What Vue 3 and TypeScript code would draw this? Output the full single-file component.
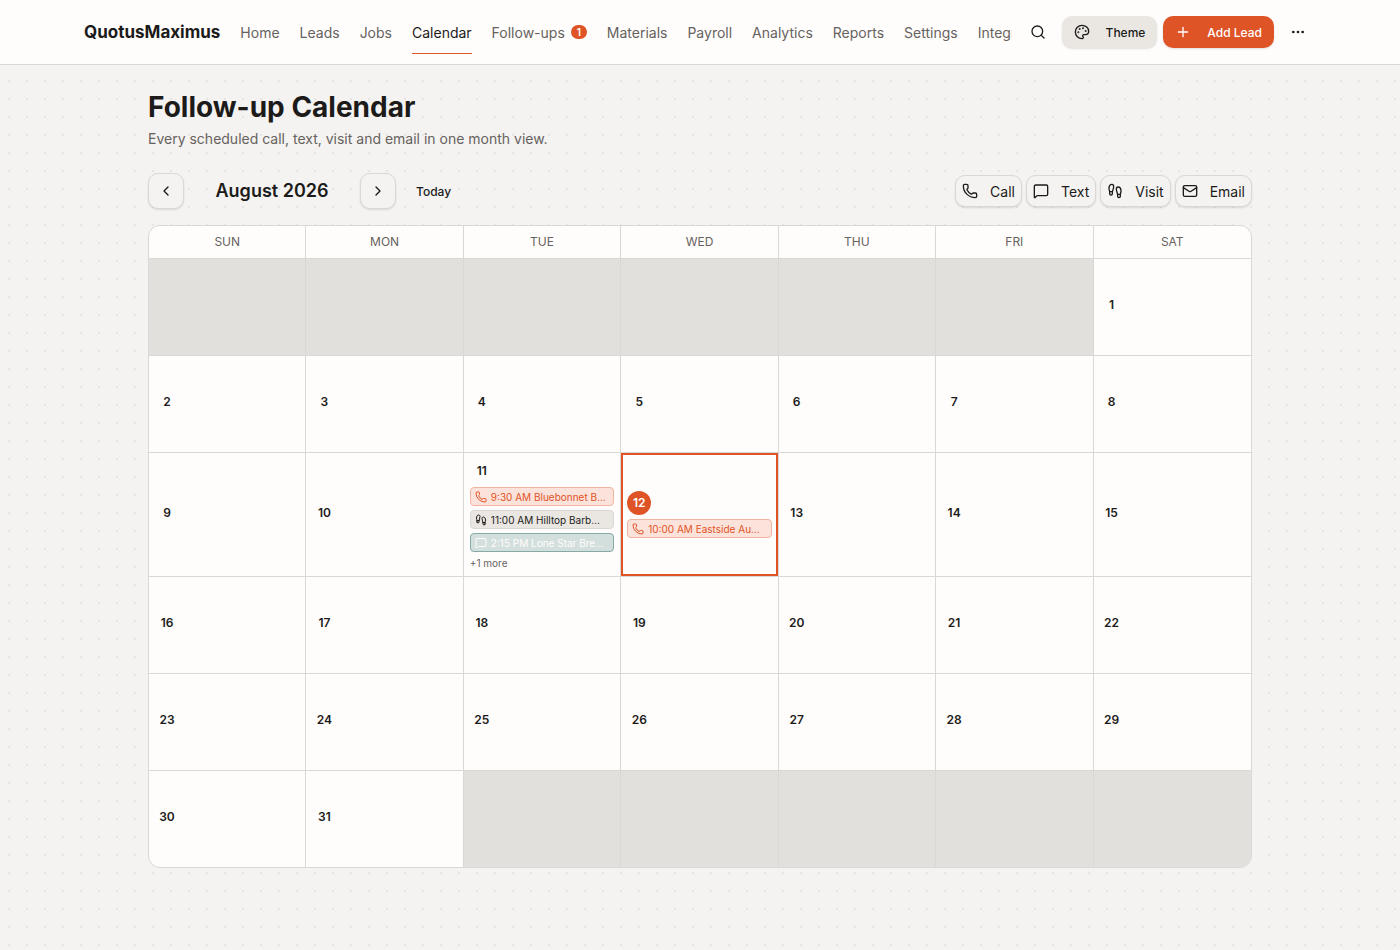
<script setup lang="ts">
import { computed, ref } from 'vue'

type Kind = 'call' | 'text' | 'visit' | 'email'
interface FollowUp { day: number; time: string; name: string; kind: Kind }

const paths: Record<string, string[]> = {
  call: ['M13.832 16.568a1 1 0 0 0 1.213-.303l.355-.465A2 2 0 0 1 17 15h3a2 2 0 0 1 2 2v3a2 2 0 0 1-2 2A18 18 0 0 1 2 4a2 2 0 0 1 2-2h3a2 2 0 0 1 2 2v3a2 2 0 0 1-.8 1.6l-.468.351a1 1 0 0 0-.292 1.233 14 14 0 0 0 6.392 6.384'],
  text: ['M22 17a2 2 0 0 1-2 2H6.828a2 2 0 0 0-1.414.586l-2.202 2.202A.71.71 0 0 1 2 21.286V5a2 2 0 0 1 2-2h16a2 2 0 0 1 2 2z'],
  visit: [
    'M4 16v-2.38C4 11.5 2.97 10.5 3 8c.03-2.72 1.49-6 4.5-6C9.37 2 10 3.8 10 5.5c0 3.11-2 5.66-2 8.68V16a2 2 0 1 1-4 0Z',
    'M20 20v-2.38c0-2.12 1.03-3.12 1-5.62-.03-2.72-1.49-6-4.5-6C14.63 6 14 7.8 14 9.5c0 3.11 2 5.66 2 8.68V20a2 2 0 1 0 4 0Z',
    'M16 17h4', 'M4 13h4',
  ],
  email: ['m22 7-8.991 5.727a2 2 0 0 1-2.009 0L2 7', 'M4 4h16a2 2 0 0 1 2 2v12a2 2 0 0 1-2 2H4a2 2 0 0 1-2-2V6a2 2 0 0 1 2-2z'],
}

const nav = ['Home', 'Leads', 'Jobs', 'Calendar', 'Follow-ups', 'Materials', 'Payroll', 'Analytics', 'Reports', 'Settings', 'Integrations']
const weekdays = ['Sun', 'Mon', 'Tue', 'Wed', 'Thu', 'Fri', 'Sat']
const filters: { kind: Kind; label: string }[] = [
  { kind: 'call', label: 'Call' },
  { kind: 'text', label: 'Text' },
  { kind: 'visit', label: 'Visit' },
  { kind: 'email', label: 'Email' },
]
const followUps: FollowUp[] = [
  { day: 11, time: '9:30 AM', name: 'Bluebonnet B…', kind: 'call' },
  { day: 11, time: '11:00 AM', name: 'Hilltop Barb…', kind: 'visit' },
  { day: 11, time: '2:15 PM', name: 'Lone Star Bre…', kind: 'text' },
  { day: 11, time: '4:00 PM', name: 'Cedar Dental', kind: 'email' },
  { day: 12, time: '10:00 AM', name: 'Eastside Au…', kind: 'call' },
]
const maxShown = 3

const today = { year: 2026, month: 7, day: 12 }
const year = ref(today.year)
const month = ref(today.month)

const title = computed(() =>
  new Date(year.value, month.value, 1).toLocaleDateString('en-US', { month: 'long', year: 'numeric' }))
const isCurrent = computed(() => year.value === today.year && month.value === today.month)

const weeks = computed(() => {
  const lead = new Date(year.value, month.value, 1).getDay()
  const count = new Date(year.value, month.value + 1, 0).getDate()
  const rows = Math.ceil((lead + count) / 7)
  return Array.from({ length: rows }, (_, r) =>
    Array.from({ length: 7 }, (_, c) => {
      const d = r * 7 + c - lead + 1
      return d > 0 && d <= count ? d : 0
    }))
})

const eventsOn = (day: number) => (isCurrent.value && day ? followUps.filter(f => f.day === day) : [])
const isToday = (day: number) => isCurrent.value && day === today.day

function shift(by: number) {
  const d = new Date(year.value, month.value + by, 1)
  year.value = d.getFullYear()
  month.value = d.getMonth()
}
function goToday() {
  year.value = today.year
  month.value = today.month
}
</script>

<template>
  <div class="page">
    <header class="topbar">
      <div class="topbar-inner">
        <a class="brand" href="#">QuotusMaximus</a>
        <nav class="nav" aria-label="Main">
          <a v-for="item in nav" :key="item" href="#" class="nav-link" :class="{ active: item === 'Calendar' }">
            {{ item }}<span v-if="item === 'Follow-ups'" class="count">1</span>
          </a>
        </nav>
        <div class="actions">
          <button class="icon-btn" type="button" aria-label="Search">
            <svg class="icon" viewBox="0 0 24 24"><path d="m21 21-4.34-4.34" /><circle cx="11" cy="11" r="8" /></svg>
          </button>
          <button class="btn theme" type="button">
            <svg class="icon" viewBox="0 0 24 24">
              <path d="M12 22a1 1 0 0 1 0-20 10 9 0 0 1 10 9 5 5 0 0 1-5 5h-2.25a1.75 1.75 0 0 0-1.4 2.8l.3.4a1.75 1.75 0 0 1-1.4 2.8z" />
              <circle class="dot" cx="13.5" cy="6.5" r=".5" /><circle class="dot" cx="17.5" cy="10.5" r=".5" />
              <circle class="dot" cx="6.5" cy="12.5" r=".5" /><circle class="dot" cx="8.5" cy="7.5" r=".5" />
            </svg>
            Theme
          </button>
          <button class="btn primary" type="button">
            <svg class="icon" viewBox="0 0 24 24"><path d="M5 12h14M12 5v14" /></svg>
            Add Lead
          </button>
          <button class="icon-btn" type="button" aria-label="More">
            <svg class="icon" viewBox="0 0 24 24">
              <circle class="dot" cx="12" cy="12" r="1" /><circle class="dot" cx="19" cy="12" r="1" /><circle class="dot" cx="5" cy="12" r="1" />
            </svg>
          </button>
        </div>
      </div>
    </header>

    <main class="content">
      <h1>Follow-up Calendar</h1>
      <p class="lede">Every scheduled call, text, visit and email in one month view.</p>

      <div class="toolbar">
        <div class="pager">
          <button class="square" type="button" aria-label="Previous month" @click="shift(-1)">
            <svg class="icon" viewBox="0 0 24 24"><path d="m15 18-6-6 6-6" /></svg>
          </button>
          <h2>{{ title }}</h2>
          <button class="square" type="button" aria-label="Next month" @click="shift(1)">
            <svg class="icon" viewBox="0 0 24 24"><path d="m9 18 6-6-6-6" /></svg>
          </button>
          <button class="btn today-btn" type="button" @click="goToday">Today</button>
        </div>
        <div class="filters">
          <button v-for="f in filters" :key="f.kind" class="filter" type="button">
            <svg class="icon" viewBox="0 0 24 24"><path v-for="d in paths[f.kind]" :key="d" :d="d" /></svg>
            {{ f.label }}
          </button>
        </div>
      </div>

      <table class="calendar">
        <thead>
          <tr><th v-for="w in weekdays" :key="w" scope="col">{{ w }}</th></tr>
        </thead>
        <tbody>
          <tr v-for="(week, r) in weeks" :key="r">
            <td v-for="(day, c) in week" :key="c" :class="{ blank: !day, today: isToday(day) }">
              <template v-if="day">
                <div class="day">{{ day }}</div>
                <div class="events">
                  <a v-for="e in eventsOn(day).slice(0, maxShown)" :key="e.name" href="#" class="event" :class="e.kind">
                    <svg class="icon" viewBox="0 0 24 24"><path v-for="d in paths[e.kind]" :key="d" :d="d" /></svg>
                    <span class="event-text">{{ e.time }} {{ e.name }}</span>
                  </a>
                  <span v-if="eventsOn(day).length > maxShown" class="more">+{{ eventsOn(day).length - maxShown }} more</span>
                </div>
              </template>
            </td>
          </tr>
        </tbody>
      </table>
    </main>
  </div>
</template>

<style>
body {
  background-color: #f4f3f1;
  background-image: radial-gradient(circle, #e6e5e2 1px, transparent 1px);
  background-size: 18px 18px;
}
</style>

<style scoped>
.page {
  font-family: Inter, "Liberation Sans", sans-serif;
  font-size: 14px;
  color: #1c1b1a;
}
.page *, .page *::before { box-sizing: border-box; }
a { color: inherit; text-decoration: none; }
button { font: inherit; color: inherit; background: none; border: 0; padding: 0; cursor: pointer; }
.icon {
  width: 16px;
  height: 16px;
  flex: none;
  fill: none;
  stroke: currentColor;
  stroke-width: 2;
  stroke-linecap: round;
  stroke-linejoin: round;
}
.dot { fill: currentColor; }

.topbar { background: #fffdfc; border-bottom: 1px solid #d9d8d5; }
.topbar-inner {
  display: flex;
  align-items: center;
  height: 64px;
  max-width: 1280px;
  margin: 0 auto;
  padding: 0 24px;
}
.brand { font-size: 17px; font-weight: 700; margin-right: 20px; }
.nav { display: flex; gap: 20px; flex: 1 1 0; min-width: 0; overflow: hidden; margin-right: 8px; }
.nav-link {
  display: flex;
  align-items: center;
  flex: none;
  height: 44px;
  border-top: 1px solid transparent;
  border-bottom: 1px solid transparent;
  color: #66625e;
}
.nav-link.active { color: #1c1b1a; border-bottom-color: #df5427; }
.count {
  margin-left: 6px;
  width: 16px;
  height: 14px;
  border-radius: 7px;
  background: #df5427;
  color: #fff;
  font-size: 10px;
  font-weight: 600;
  line-height: 14px;
  text-align: center;
}
.actions { display: flex; align-items: center; gap: 6px; flex: none; }
.icon-btn { display: flex; align-items: center; justify-content: center; width: 36px; height: 36px; }
.btn {
  display: flex;
  align-items: center;
  gap: 16px;
  height: 32px;
  padding: 0 12px;
  border-radius: 10px;
  font-size: 12px;
  font-weight: 500;
}
.theme { background: #eae7e2; box-shadow: 0 1px 2px rgba(0, 0, 0, 0.12); }
.primary { background: #df5427; color: #fff; box-shadow: 0 1px 2px rgba(0, 0, 0, 0.12); }

.content { max-width: 1152px; margin: 0 auto; padding: 24px; }
h1 { margin: 0; font-size: 28px; line-height: 36px; font-weight: 700; }
.lede { margin: 4px 0 0; line-height: 20px; color: #66625e; }
.toolbar { display: flex; align-items: center; justify-content: space-between; margin: 24px 0 16px; }
.pager, .filters { display: flex; align-items: center; }
.pager { gap: 8px; }
.filters { gap: 4px; }
h2 { margin: 0; width: 160px; font-size: 18px; line-height: 28px; font-weight: 600; text-align: center; }
.square, .filter {
  display: flex;
  align-items: center;
  justify-content: center;
  border: 1px solid #d9d8d5;
  border-radius: 10px;
  background: #f4f3f1;
  box-shadow: 0 1px 2px rgba(0, 0, 0, 0.12);
}
.square { width: 36px; height: 36px; }
.filter { height: 32px; padding: 0 6px; gap: 12px; }

.calendar {
  width: 100%;
  table-layout: fixed;
  border-collapse: separate;
  border-spacing: 0;
  border: 1px solid #d9d8d5;
  border-radius: 12px;
  overflow: hidden;
  background: #fffdfc;
}
th {
  height: 33px;
  padding: 0;
  font-size: 12px;
  line-height: 16px;
  font-weight: 400;
  text-transform: uppercase;
  color: #66625e;
  border-right: 1px solid #d9d8d5;
  border-bottom: 1px solid #d9d8d5;
}
td {
  height: 97px;
  padding: 6px;
  vertical-align: middle;
  border-right: 1px solid #d9d8d5;
  border-bottom: 1px solid #d9d8d5;
}
th:last-child, td:last-child { border-right: 0; }
tbody tr:last-child td { border-bottom: 0; height: 96px; }
.blank { background: #e1e0dc; }
.today { box-shadow: inset 0 0 0 2px #df5427; }
.day {
  width: 24px;
  height: 24px;
  margin-bottom: 4px;
  border-radius: 50%;
  font-size: 12px;
  font-weight: 600;
  line-height: 24px;
  text-align: center;
}
.today .day { background: #df5427; color: #fff; }
.events { display: flex; flex-direction: column; gap: 4px; }
.event {
  display: flex;
  align-items: center;
  gap: 4px;
  height: 19px;
  padding: 0 4px;
  border: 1px solid;
  border-radius: 4px;
  font-size: 10px;
  line-height: 14px;
}
.event .icon { width: 12px; height: 12px; }
.event-text { min-width: 0; overflow: hidden; white-space: nowrap; text-overflow: ellipsis; }
.event.call { background: #fbe2da; border-color: #f0b5a2; color: #df5427; }
.event.visit { background: #eae7e2; border-color: #d9d8d5; color: #1c1b1a; }
.event.text { background: #d3dfdd; border-color: #86aaa5; color: #fffdfc; }
.event.email { background: #eae7e2; border-color: #d9d8d5; color: #66625e; }
.more { font-size: 10px; line-height: 14px; color: #66625e; }
</style>
